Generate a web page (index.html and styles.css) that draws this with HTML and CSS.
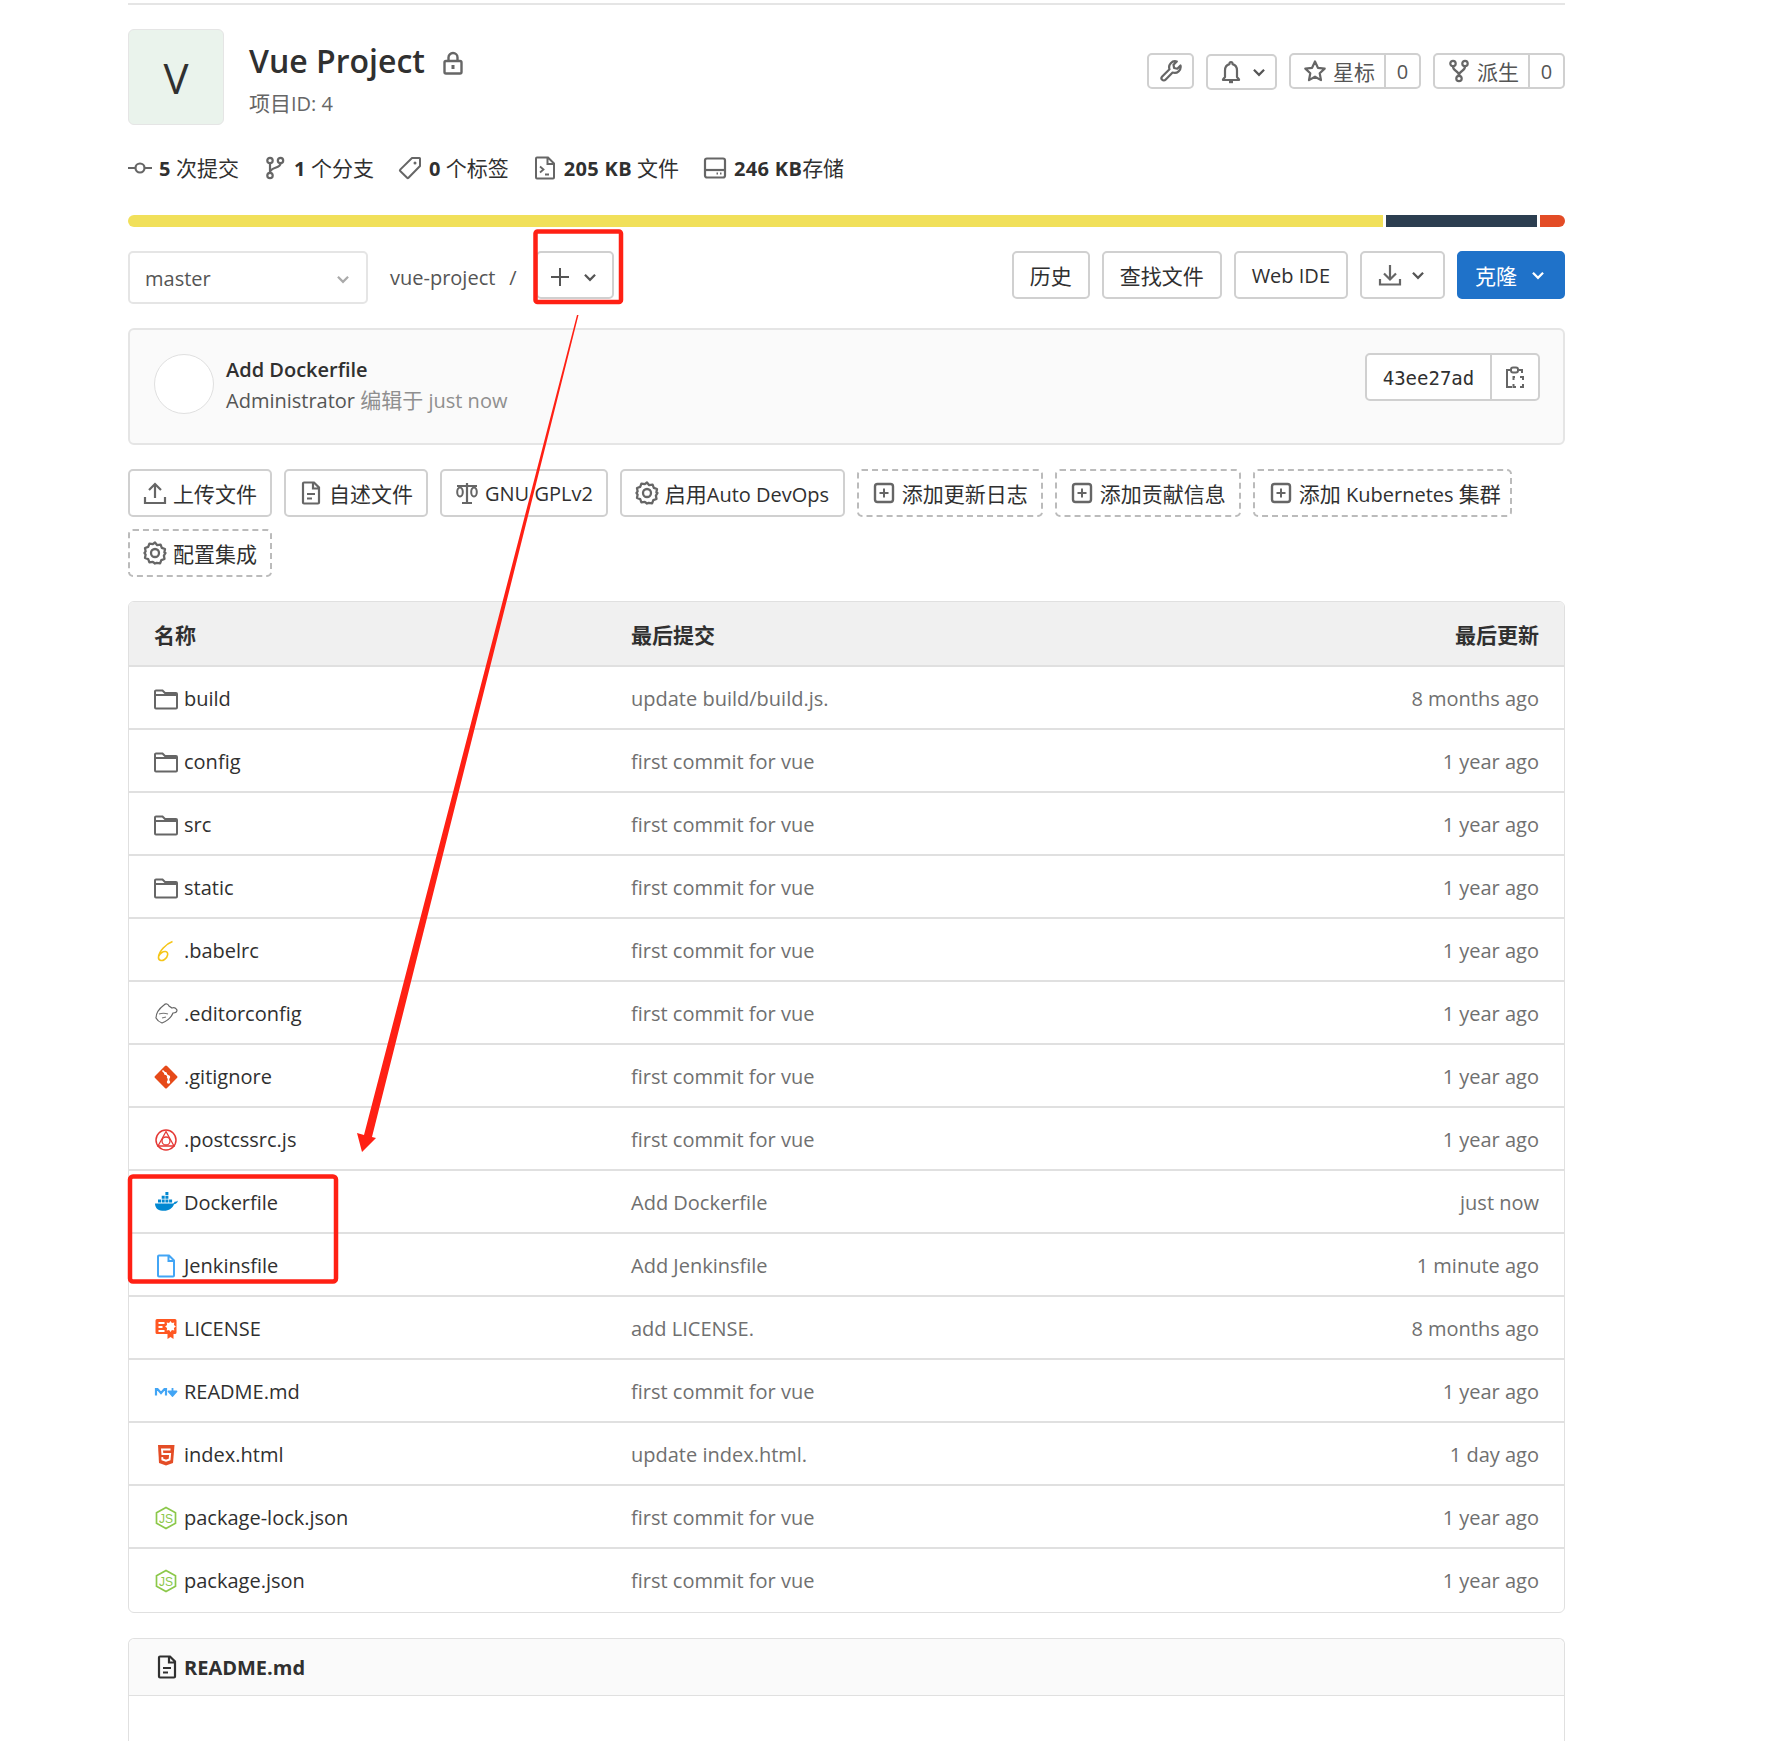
FILE: index.html
```html
<!DOCTYPE html>
<html lang="zh">

<head>
    <meta charset="utf-8">
    <title>Vue Project</title>
    <link rel="stylesheet" href="styles.css">
</head>

<body>
    <!-- icon sprite -->
    <svg class="sprite" xmlns="http://www.w3.org/2000/svg">
        <symbol id="i-folder" viewBox="0 0 24 24"><path d="M1 20.500V4.500a1 1 0 0 1 1-1h6.500l2.500 2.500h11a1 1 0 0 1 1 1v13.500a1 1 0 0 1-1 1H2a1 1 0 0 1-1-1zM1 8h22" fill="none" stroke="#666" stroke-width="2"/></symbol>
        <symbol id="i-chevron" viewBox="0 0 16 16"><path d="M3.500 6l4.500 4.500L12.500 6" fill="none" stroke="currentColor" stroke-width="2"/></symbol>
        <symbol id="i-gear" viewBox="0 0 24 24"><path d="M12 1.500l2.200 2.700 3.400-.6 1.200 3.200 3.200 1.200-.6 3.400L22.500 12l-1.600 2.600.6 3.400-3.200 1.200-1.200 3.200-3.400-.6L12 22.500l-2.200-1.700-3.400.6-1.200-3.200L2 17l.6-3.400L1.500 12l1.100-1.600L2 7l3.200-1.200 1.200-3.200 3.400.6z" fill="none" stroke="#666" stroke-width="2.300" stroke-linejoin="round"/><circle cx="12" cy="12" r="4" fill="none" stroke="#666" stroke-width="2.300"/></symbol>
        <symbol id="i-plus" viewBox="0 0 24 24"><rect x="3" y="3" width="18" height="18" rx="2.500" fill="none" stroke="#666" stroke-width="2.400"/><path d="M12 7.500v9M7.500 12h9" stroke="#666" stroke-width="2"/></symbol>
        <symbol id="i-node" viewBox="0 0 24 24"><path d="M12 1.500l9.500 5.300v10.400L12 22.500l-9.500-5.300V6.800z" fill="none" stroke="#8cc84b" stroke-width="1.700"/><text x="12" y="16.500" text-anchor="middle" font-family="Liberation Sans" font-size="12" fill="#8cc84b">JS</text></symbol>
    </svg>

    <div class="page">
        <header class="proj-head">
            <div class="proj-avatar">V</div>
            <div class="proj-info">
                <h1 class="proj-title">Vue Project
                    <svg class="ico lock" viewBox="0 0 24 24"><rect x="3.500" y="10" width="17" height="12.500" rx="1.500" fill="none" stroke="#666" stroke-width="2.400"/><path d="M7.500 10V6.500a4.500 4.500 0 0 1 9 0V10" fill="none" stroke="#666" stroke-width="2.400"/><rect x="10.500" y="14" width="3" height="4" fill="#666"/></svg>
                </h1>
                <div class="proj-id"><span class="zh">项目</span>ID: 4</div>
            </div>
            <div class="proj-btns">
                <a class="btn btn-sm w-wrench">
                    <svg class="ico" viewBox="0 0 24 24"><path d="M21.500 6.500a6 6 0 0 1-7.900 7L6.500 20.800a2.300 2.300 0 0 1-3.300-3.300l7.300-7.200a6 6 0 0 1 7.300-7.800l-3.300 3.300.6 3.200 3.200.7z" fill="none" stroke="#666" stroke-width="2.200" stroke-linejoin="round"/></svg>
                </a>
                <a class="btn btn-sm w-bell low">
                    <svg class="ico" viewBox="0 0 24 24"><path d="M12 2a1.500 1.500 0 0 1 1.500 1.500v.6C17 5 18 7.500 18 10.500V17l2 2.500v.5H4v-.5L6 17v-6.500c0-3 1-5.500 4.500-6.400v-.6A1.500 1.500 0 0 1 12 2z" fill="none" stroke="#666" stroke-width="2.200" stroke-linejoin="round"/><path d="M10 22h4" stroke="#666" stroke-width="2.400"/></svg>
                    <svg class="chev" ><use href="#i-chevron"/></svg>
                </a>
                <div class="btn-group">
                    <a class="btn btn-sm btn-main">
                        <svg class="ico" viewBox="0 0 24 24"><path d="M12 2.500l2.900 6.300 6.800.8-5 4.700 1.300 6.800-6-3.400-6 3.400 1.300-6.800-5-4.700 6.800-.8z" fill="none" stroke="#666" stroke-width="2.200" stroke-linejoin="round"/></svg>
                        <span class="zh">星标</span>
                    </a>
                    <a class="btn btn-sm btn-count">0</a>
                </div>
                <div class="btn-group">
                    <a class="btn btn-sm btn-main">
                        <svg class="ico" viewBox="0 0 24 24"><circle cx="6" cy="4.500" r="2.700" fill="none" stroke="#666" stroke-width="2.200"/><circle cx="18" cy="4.500" r="2.700" fill="none" stroke="#666" stroke-width="2.200"/><circle cx="12" cy="19.500" r="2.700" fill="none" stroke="#666" stroke-width="2.200"/><path d="M6 7.500c0 5 6 4 6 9M18 7.500c0 5-6 4-6 9" fill="none" stroke="#666" stroke-width="2.200"/></svg>
                        <span class="zh">派生</span>
                    </a>
                    <a class="btn btn-sm btn-count">0</a>
                </div>
            </div>
        </header>

        <ul class="stats">
            <li>
                <svg class="ico" viewBox="0 0 24 24"><circle cx="12" cy="12" r="4.500" fill="none" stroke="#666" stroke-width="2.200"/><path d="M0 12h7.500M16.500 12H24" stroke="#666" stroke-width="2.200"/></svg>
                <span><b>5</b> <span class="zh">次提交</span></span>
            </li>
            <li>
                <svg class="ico" viewBox="0 0 24 24"><circle cx="7" cy="4.500" r="2.700" fill="none" stroke="#666" stroke-width="2.200"/><circle cx="7" cy="19.500" r="2.700" fill="none" stroke="#666" stroke-width="2.200"/><circle cx="17.500" cy="4.500" r="2.700" fill="none" stroke="#666" stroke-width="2.200"/><path d="M7 7.500v9M17.500 7.500c0 5-10.500 3.500-10.500 9" fill="none" stroke="#666" stroke-width="2.200"/></svg>
                <span><b>1</b> <span class="zh">个分支</span></span>
            </li>
            <li>
                <svg class="ico" viewBox="0 0 24 24"><path d="M14 2h7.500a.5.500 0 0 1 .5.500V10L10.500 21.800a1 1 0 0 1-1.400 0L2.200 15a1 1 0 0 1 0-1.400z" fill="none" stroke="#666" stroke-width="2" stroke-linejoin="round"/><circle cx="17" cy="7" r="1.500" fill="#666"/></svg>
                <span><b>0</b> <span class="zh">个标签</span></span>
            </li>
            <li>
                <svg class="ico" viewBox="0 0 24 24"><path d="M4 1.500h11l6 6v14a1 1 0 0 1-1 1H4a1 1 0 0 1-1-1v-19a1 1 0 0 1 1-1zM14.500 1.500v6.500H21" fill="none" stroke="#666" stroke-width="2"/><path d="M7 10.500l3.500 3-3.500 3M12 18.500h4" fill="none" stroke="#666" stroke-width="1.800"/></svg>
                <span><b>205 KB</b> <span class="zh">文件</span></span>
            </li>
            <li>
                <svg class="ico" viewBox="0 0 24 24"><rect x="2" y="2.500" width="20" height="19" rx="2" fill="none" stroke="#666" stroke-width="2.200"/><path d="M2 14h20" stroke="#666" stroke-width="2.200"/><path d="M13.500 17.500h1.500M17 17.500h1.500" stroke="#666" stroke-width="2"/></svg>
                <span><b>246 KB</b><span class="zh">存储</span></span>
            </li>
        </ul>

        <div class="lang-bar">
            <span class="lang lang-js"></span>
            <span class="lang lang-vue"></span>
            <span class="lang lang-html"></span>
        </div>

        <div class="tree-ctrl">
            <div class="ref-select">master <svg class="chev pale"><use href="#i-chevron"/></svg></div>
            <span class="crumb">vue-project</span>
            <span class="crumb-sep">/</span>
            <a class="btn add-btn">
                <svg class="ico" viewBox="0 0 24 24"><path d="M12 3v18M3 12h18" stroke="#555" stroke-width="2"/></svg>
                <svg class="chev"><use href="#i-chevron"/></svg>
            </a>
            <div class="tree-right">
                <a class="btn"><span class="zh">历史</span></a>
                <a class="btn"><span class="zh">查找文件</span></a>
                <a class="btn">Web IDE</a>
                <a class="btn">
                    <svg class="ico" viewBox="0 0 24 24"><path d="M12 2v14M6 10.500l6 6 6-6M2 16v5.500h20V16" fill="none" stroke="#666" stroke-width="2.200"/></svg>
                    <svg class="chev"><use href="#i-chevron"/></svg>
                </a>
                <a class="btn btn-blue"><span class="zh">克隆</span> <svg class="chev"><use href="#i-chevron"/></svg></a>
            </div>
        </div>

        <div class="commit">
            <div class="commit-avatar"></div>
            <div class="commit-text">
                <div class="commit-title">Add Dockerfile</div>
                <div class="commit-meta">Administrator <span class="pale-txt"><span class="zh">编辑于</span> just now</span></div>
            </div>
            <div class="sha-group">
                <span class="sha">43ee27ad</span>
                <span class="sha-copy">
                    <svg class="ico" viewBox="0 0 24 24"><path d="M8 5H4v17h5M16 5h3v3" fill="none" stroke="#666" stroke-width="2"/><rect x="8" y="2.500" width="7" height="5" rx="2" fill="none" stroke="#666" stroke-width="2"/><path d="M12 12h-1.500v3M17 12h3v3M10.500 19v3H13M20 19v3h-3" fill="none" stroke="#666" stroke-width="2"/></svg>
                </span>
            </div>
        </div>

        <div class="actions">
            <a class="btn">
                <svg class="ico" viewBox="0 0 24 24"><path d="M12 17V3M6 9l6-6 6 6M2 16v6h20v-6" fill="none" stroke="#666" stroke-width="2.200"/></svg>
                <span class="zh">上传文件</span>
            </a>
            <a class="btn">
                <svg class="ico" viewBox="0 0 24 24"><path d="M5 1.500h10l5 5v15a1 1 0 0 1-1 1H5a1 1 0 0 1-1-1v-19a1 1 0 0 1 1-1zM14 1.500v6h6" fill="none" stroke="#666" stroke-width="2.200"/><path d="M8 13h8M8 17.500h5" stroke="#666" stroke-width="2"/></svg>
                <span class="zh">自述文件</span>
            </a>
            <a class="btn">
                <svg class="ico" viewBox="0 0 24 24"><path d="M12 2v20M7 22h10M2 5h20" stroke="#666" stroke-width="2.200"/><ellipse cx="5" cy="11" rx="2.800" ry="4.500" fill="none" stroke="#666" stroke-width="2"/><ellipse cx="19" cy="11" rx="2.800" ry="4.500" fill="none" stroke="#666" stroke-width="2"/></svg>
                GNU GPLv2
            </a>
            <a class="btn w-devops">
                <svg class="ico"><use href="#i-gear"/></svg>
                <span><span class="zh">启用</span>Auto DevOps</span>
            </a>
            <a class="btn btn-dash">
                <svg class="ico"><use href="#i-plus"/></svg>
                <span class="zh">添加更新日志</span>
            </a>
            <a class="btn btn-dash">
                <svg class="ico"><use href="#i-plus"/></svg>
                <span class="zh">添加贡献信息</span>
            </a>
            <a class="btn btn-dash w-k8s">
                <svg class="ico"><use href="#i-plus"/></svg>
                <span><span class="zh">添加</span> Kubernetes <span class="zh">集群</span></span>
            </a>
            <a class="btn btn-dash">
                <svg class="ico"><use href="#i-gear"/></svg>
                <span class="zh">配置集成</span>
            </a>
        </div>

        <div class="tree-wrap">
            <table class="tree">
                <thead>
                    <tr>
                        <th class="c-name"><span class="zh">名称</span></th>
                        <th class="c-msg"><span class="zh">最后提交</span></th>
                        <th class="c-time"><span class="zh">最后更新</span></th>
                    </tr>
                </thead>
                <tbody>
                    <tr>
                        <td class="c-name"><div class="fname"><svg class="ico"><use href="#i-folder"/></svg>build</div></td>
                        <td class="c-msg">update build/build.js.</td>
                        <td class="c-time">8 months ago</td>
                    </tr>
                    <tr>
                        <td class="c-name"><div class="fname"><svg class="ico"><use href="#i-folder"/></svg>config</div></td>
                        <td class="c-msg">first commit for vue</td>
                        <td class="c-time">1 year ago</td>
                    </tr>
                    <tr>
                        <td class="c-name"><div class="fname"><svg class="ico"><use href="#i-folder"/></svg>src</div></td>
                        <td class="c-msg">first commit for vue</td>
                        <td class="c-time">1 year ago</td>
                    </tr>
                    <tr>
                        <td class="c-name"><div class="fname"><svg class="ico"><use href="#i-folder"/></svg>static</div></td>
                        <td class="c-msg">first commit for vue</td>
                        <td class="c-time">1 year ago</td>
                    </tr>
                    <tr>
                        <td class="c-name"><div class="fname">
                            <svg class="ico" viewBox="0 0 24 24"><path d="M18.500 2.500C12 5 5 12 4.500 18c-.3 3.500 3 4.500 6 2.500 3.500-2.400 4.500-7.500 1-8-2.500-.3-5 1.500-7 5" fill="none" stroke="#f5c518" stroke-width="1.600"/></svg>
                            .babelrc</div></td>
                        <td class="c-msg">first commit for vue</td>
                        <td class="c-time">1 year ago</td>
                    </tr>
                    <tr>
                        <td class="c-name"><div class="fname">
                            <svg class="ico" viewBox="0 0 24 24"><path d="M10 3c2-2 4-1 5 1l3 2c2-1 4 0 5 2 0 2-2 3-4 3-2 5-6 8-11 10-3-1-5-3-6-5 0-5 4-10 8-13z" fill="none" stroke="#666" stroke-width="1.200"/><path d="M5 12c3-1 6-1 9 0M8 16l4-1" fill="none" stroke="#777" stroke-width="1.200"/></svg>
                            .editorconfig</div></td>
                        <td class="c-msg">first commit for vue</td>
                        <td class="c-time">1 year ago</td>
                    </tr>
                    <tr>
                        <td class="c-name"><div class="fname">
                            <svg class="ico" viewBox="0 0 24 24"><rect x="3.500" y="3.500" width="17" height="17" rx="1.500" transform="rotate(45 12 12)" fill="#e64a19"/><path d="M8.500 5.500l6 6v6" fill="none" stroke="#fff" stroke-width="1.600"/><circle cx="11.500" cy="8.500" r="1.500" fill="#fff"/><circle cx="14.500" cy="12" r="1.700" fill="#fff"/><circle cx="14.500" cy="17" r="1.700" fill="#fff"/></svg>
                            .gitignore</div></td>
                        <td class="c-msg">first commit for vue</td>
                        <td class="c-time">1 year ago</td>
                    </tr>
                    <tr>
                        <td class="c-name"><div class="fname">
                            <svg class="ico" viewBox="0 0 24 24"><circle cx="12" cy="12" r="10" fill="none" stroke="#e53935" stroke-width="1.500"/><path d="M12 3.500l8 14.500H4z" fill="none" stroke="#e53935" stroke-width="1.300"/><circle cx="12" cy="13" r="4" fill="none" stroke="#e53935" stroke-width="1.300"/></svg>
                            .postcssrc.js</div></td>
                        <td class="c-msg">first commit for vue</td>
                        <td class="c-time">1 year ago</td>
                    </tr>
                    <tr>
                        <td class="c-name"><div class="fname">
                            <svg class="ico" viewBox="0 0 24 24"><path d="M1 12.500h17.500c1 0 1.800-.8 2-1.800.8 0 2.500 0 3.500-1.200-.5 2.500-2.500 3.700-4 3.800-1.500 4-5 6.500-10 6.500-5 0-9-2-9-7.300z" fill="#0288d1"/><path d="M4 8.500h3v3H4zM7.700 8.500h3v3h-3zM11.400 8.500h3v3h-3zM7.700 4.800h3v3h-3zM11.400 4.800h3v3h-3zM11.400 1.100h3v3h-3zM15.100 8.500h3v3h-3z" fill="#0288d1"/></svg>
                            Dockerfile</div></td>
                        <td class="c-msg">Add Dockerfile</td>
                        <td class="c-time">just now</td>
                    </tr>
                    <tr>
                        <td class="c-name"><div class="fname">
                            <svg class="ico" viewBox="0 0 24 24"><path d="M5 1.500h10l5 5v15a1 1 0 0 1-1 1H5a1 1 0 0 1-1-1v-19a1 1 0 0 1 1-1zM14.500 1.500V7h5.500" fill="none" stroke="#42a5f5" stroke-width="2"/></svg>
                            Jenkinsfile</div></td>
                        <td class="c-msg">Add Jenkinsfile</td>
                        <td class="c-time">1 minute ago</td>
                    </tr>
                    <tr>
                        <td class="c-name"><div class="fname">
                            <svg class="ico" viewBox="0 0 24 24"><path d="M3 2h18a1.500 1.500 0 0 1 1.500 1.500v12A1.500 1.500 0 0 1 21 17h-1.500v5l-3-2-3 2v-5H3a1.500 1.500 0 0 1-1.500-1.500v-12A1.500 1.500 0 0 1 3 2z" fill="#ff5722"/><path d="M4.500 6h6M4.500 10h4M4.500 14h6" stroke="#fff" stroke-width="2"/><path d="M16.500 4l1.400 2 2.400-.4-.4 2.400 2 1.500-2 1.500.4 2.400-2.400-.4-1.400 2-1.400-2-2.400.4.400-2.400-2-1.500 2-1.500-.4-2.400 2.400.4z" fill="#fff"/></svg>
                            LICENSE</div></td>
                        <td class="c-msg">add LICENSE.</td>
                        <td class="c-time">8 months ago</td>
                    </tr>
                    <tr>
                        <td class="c-name"><div class="fname">
                            <svg class="ico" viewBox="0 0 24 24"><path d="M2 15.500V9h1.500l3.500 4 3.500-4H12v6.500" fill="none" stroke="#42a5f5" stroke-width="2.200"/><path d="M18.500 8v4.500M14.500 11.500h8l-4 4.500z" fill="#42a5f5" stroke="#42a5f5" stroke-width="1.800" stroke-linejoin="round"/></svg>
                            README.md</div></td>
                        <td class="c-msg">first commit for vue</td>
                        <td class="c-time">1 year ago</td>
                    </tr>
                    <tr>
                        <td class="c-name"><div class="fname">
                            <svg class="ico" viewBox="0 0 24 24"><path d="M4 2h16.500L19 20l-7 2.500L5 20z" fill="#e44d26"/><path d="M16.500 6.500H8l.4 4.500h7.700l-.5 5.500-3.600 1.200-3.600-1.200-.2-2.300" fill="none" stroke="#fff" stroke-width="1.900"/></svg>
                            index.html</div></td>
                        <td class="c-msg">update index.html.</td>
                        <td class="c-time">1 day ago</td>
                    </tr>
                    <tr>
                        <td class="c-name"><div class="fname"><svg class="ico"><use href="#i-node"/></svg>package-lock.json</div></td>
                        <td class="c-msg">first commit for vue</td>
                        <td class="c-time">1 year ago</td>
                    </tr>
                    <tr>
                        <td class="c-name"><div class="fname"><svg class="ico"><use href="#i-node"/></svg>package.json</div></td>
                        <td class="c-msg">first commit for vue</td>
                        <td class="c-time">1 year ago</td>
                    </tr>
                </tbody>
            </table>
        </div>

        <div class="readme">
            <div class="readme-head">
                <svg class="ico" viewBox="0 0 24 24"><path d="M5 1.500h10l5 5v15a1 1 0 0 1-1 1H5a1 1 0 0 1-1-1v-19a1 1 0 0 1 1-1zM14 1.500v6h6" fill="none" stroke="#303030" stroke-width="2.200"/><path d="M8 13h8M8 17.500h5" stroke="#303030" stroke-width="2"/></svg>
                README.md
            </div>
        </div>
    </div>

    <!-- red marks drawn on top of the screenshot -->
    <svg class="marks" viewBox="0 0 1790 1741" xmlns="http://www.w3.org/2000/svg">
        <rect x="535.500" y="231.500" width="85.500" height="70.500" rx="2" fill="none" stroke="#ff2014" stroke-width="4.500"/>
        <rect x="130" y="1176.500" width="206" height="105" rx="3" fill="none" stroke="#ff2014" stroke-width="4.500"/>
        <polygon points="577,315 578.500,315 372,1137 376,1138 362,1152 357,1133 364,1135" fill="#ff2014"/>
    </svg>
</body>

</html>
```
FILE: styles.css
```css
html,
body {
    margin: 0;
    height: 1741px;
    overflow: hidden;
    background: #fff;
}

body {
    position: relative;
    font-family: "Open Sans", "Noto Sans CJK SC", sans-serif;
    font-size: 20px;
    color: #303030;
}

.zh {
    font-size: 21px;
    font-family: "Noto Sans CJK SC", sans-serif;
}

.sprite {
    display: none;
}

.ico {
    width: 24px;
    height: 24px;
    flex: none;
}

.chev {
    width: 18px;
    height: 18px;
    flex: none;
    color: #555;
}

.chev.pale {
    color: #aaa;
}

.page {
    width: 1437px;
    margin: 3px 0 0 128px;
    border-top: 2px solid #e5e5e5;
}

/* project header */
.proj-head {
    display: flex;
    padding-top: 24px;
}

.proj-avatar {
    width: 96px;
    height: 96px;
    box-sizing: border-box;
    border: 1px solid #e5e5e5;
    border-radius: 6px;
    background: #eaf3ec;
    display: flex;
    align-items: center;
    justify-content: center;
    font-size: 42px;
    color: #303030;
}

.proj-info {
    margin-left: 25px;
}

.proj-title {
    margin: 4px 0 0;
    font-size: 32px;
    line-height: 56px;
    font-weight: 600;
    display: flex;
    align-items: center;
    gap: 16px;
}

.lock {
    margin-top: 4px;
}

.proj-id {
    margin-top: -2px;
    line-height: 30px;
    color: #666;
}

.proj-btns {
    margin-left: auto;
    margin-top: 24px;
    display: flex;
    align-items: flex-start;
    gap: 12px;
}

/* buttons */
.btn {
    display: flex;
    align-items: center;
    gap: 6px;
    box-sizing: border-box;
    height: 48px;
    padding: 0 16px;
    border: 2px solid #d0d0d0;
    border-radius: 5px;
    background: #fff;
    color: #303030;
    white-space: nowrap;
}

.btn-sm {
    height: 36px;
    color: #555;
}

.w-wrench {
    width: 47px;
    padding: 0;
    justify-content: center;
}

.w-bell {
    width: 71px;
    padding: 0 0 0 11px;
    gap: 7px;
}

.low {
    margin-top: 1px;
}

.btn-group {
    display: flex;
}

.btn-main {
    border-radius: 5px 0 0 5px;
    padding: 0 9px 0 12px;
}

.btn-count {
    width: 35px;
    justify-content: center;
    border-left: 0;
    border-radius: 0 5px 5px 0;
    padding: 0;
}

.btn-blue {
    background: #1f72c9;
    border-color: #1f72c9;
    color: #fff;
    gap: 12px;
}

.btn-blue .chev {
    color: #fff;
}

.btn-dash {
    border: 2px dashed #bbb;
}

/* stats */
.stats {
    list-style: none;
    display: flex;
    height: 30px;
    margin: 28px 0 0;
    padding: 0;
    gap: 24px;
    line-height: 30px;
}

.stats li {
    display: flex;
    align-items: center;
    gap: 7px;
    height: 30px;
    white-space: pre;
}

.stats b {
    font-weight: 700;
    letter-spacing: .3px;
}

/* language bar */
.lang-bar {
    display: flex;
    gap: 3px;
    height: 12px;
    margin-top: 32px;
    border-radius: 6px;
    overflow: hidden;
}

.lang-js {
    width: 1255px;
    background: #f1e05a;
}

.lang-vue {
    width: 151px;
    background: #2c3e50;
}

.lang-html {
    width: 25px;
    background: #e34c26;
}

/* branch + path row */
.tree-ctrl {
    display: flex;
    align-items: flex-start;
    height: 53px;
    margin-top: 24px;
}

.ref-select {
    width: 240px;
    height: 53px;
    box-sizing: border-box;
    padding: 2px 14px 0 15px;
    border: 2px solid #e5e5e5;
    border-radius: 5px;
    display: flex;
    align-items: center;
    justify-content: space-between;
    color: #555;
}

.crumb {
    margin-left: 22px;
    line-height: 54px;
    color: #555;
}

.crumb-sep {
    margin-left: 14px;
    line-height: 54px;
    color: #555;
}

.add-btn {
    width: 78px;
    margin-left: 19px;
    padding: 3px 0 0 10px;
    gap: 9px;
}

.tree-right {
    margin-left: auto;
    display: flex;
    gap: 12px;
}

.tree-right .btn {
    gap: 7px;
}

.tree-right .btn-blue {
    gap: 12px;
}

/* last commit */
.commit {
    display: flex;
    align-items: center;
    box-sizing: border-box;
    height: 117px;
    margin-top: 24px;
    padding: 0 23px 0 24px;
    background: #fafafa;
    border: 2px solid #e5e5e5;
    border-radius: 6px;
}

.commit-avatar {
    width: 60px;
    height: 60px;
    box-sizing: border-box;
    margin-top: -6px;
    border: 1px solid #e0e0e0;
    border-radius: 50%;
    background: #fff;
}

.commit-text {
    margin: -4px 0 0 12px;
    line-height: 31px;
}

.commit-title {
    font-weight: 600;
}

.commit-meta {
    margin-top: -1px;
    color: #555;
}

.pale-txt {
    color: #8f8f8f;
}

.sha-group {
    margin-left: auto;
    margin-top: -19px;
    display: flex;
    height: 48px;
    box-sizing: border-box;
    border: 2px solid #d0d0d0;
    border-radius: 5px;
    background: #fff;
}

.sha {
    width: 123px;
    text-align: center;
    line-height: 46px;
    font-family: "DejaVu Sans Mono", "Liberation Mono", monospace;
    font-size: 19px;
    border-right: 2px solid #d0d0d0;
}

.sha-copy {
    width: 46px;
    display: flex;
    align-items: center;
    justify-content: center;
}

/* action buttons */
.actions {
    display: flex;
    flex-wrap: wrap;
    gap: 12px;
    margin-top: 24px;
}

.actions .btn {
    padding: 0 13px;
}

.actions .w-devops {
    width: 225px;
}

.actions .w-k8s {
    width: 259px;
    padding: 0 0 0 14px;
}

/* file table */
.tree-wrap {
    margin-top: 24px;
    border: 1px solid #e0e0e0;
    border-radius: 6px;
    overflow: hidden;
}

.tree {
    width: 100%;
    border-collapse: separate;
    border-spacing: 0;
    table-layout: fixed;
}

.tree th,
.tree td {
    padding: 0;
    text-align: left;
    border-bottom: 2px solid #e0e0e0;
}

.tree th {
    height: 63px;
    background: #f0f0f0;
    font-weight: 700;
}

.tree tbody td {
    height: 59px;
    padding-top: 2px;
}

.tree tbody tr:last-child td {
    padding-bottom: 2px;
    border-bottom: 0;
}

.tree .c-name {
    width: 477px;
    padding-left: 25px;
}

.tree .c-msg {
    color: #707070;
}

.tree th.c-msg {
    color: #303030;
}

.tree .c-time {
    width: 300px;
    padding-right: 25px;
    text-align: right;
    color: #707070;
}

.tree th.c-time {
    color: #303030;
}

.fname {
    display: flex;
    align-items: center;
    gap: 6px;
}

/* readme */
.readme {
    height: 110px;
    margin-top: 25px;
    border: 1px solid #e0e0e0;
    border-bottom: 0;
    border-radius: 6px 6px 0 0;
}

.readme-head {
    height: 57px;
    box-sizing: border-box;
    padding-left: 26px;
    display: flex;
    align-items: center;
    gap: 5px;
    background: #fafafa;
    border-bottom: 1px solid #e0e0e0;
    font-weight: 700;
    border-radius: 6px 6px 0 0;
}

/* red annotations */
.marks {
    position: absolute;
    left: 0;
    top: 0;
    width: 1790px;
    height: 1741px;
    pointer-events: none;
}
```
